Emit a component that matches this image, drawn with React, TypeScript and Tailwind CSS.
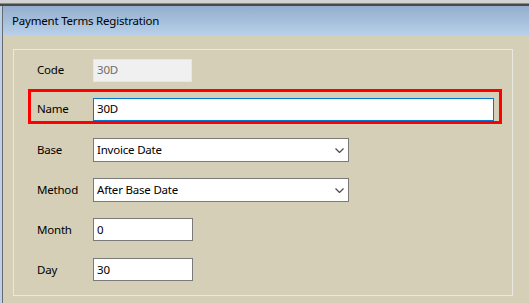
import React from "react";

const font = { fontFamily: '"Noto Sans", "Segoe UI", sans-serif' };

function Chevron() {
  return (
    <svg width="9" height="5" viewBox="0 0 9 5" className="shrink-0">
      <path d="M0.5 0.5 L4.5 4.5 L8.5 0.5" fill="none" stroke="#4a4a4a" strokeWidth="1.2" />
    </svg>
  );
}

function TextBox({ value, w, disabled, focused }: { value: string; w: string; disabled?: boolean; focused?: boolean }) {
  const cls = disabled
    ? "bg-[#f0f0f0] border-[#e6e6e6] text-[#6d6d6d]"
    : focused
    ? "bg-white border-[#0078d7] text-black"
    : "bg-white border-[#7a7a7a] text-black";
  return (
    <div className={`${w} h-[23px] border ${cls} flex items-center pl-[3px] text-[11.5px] tracking-[-0.2px] leading-none`}>
      {value}
    </div>
  );
}

function Select({ value }: { value: string }) {
  return (
    <div className="w-[256px] h-[24px] border border-[#7a7a7a] bg-white flex items-center justify-between pl-[3px] pr-[4px] text-[11.5px] tracking-[-0.2px] leading-none text-black">
      <span>{value}</span>
      <Chevron />
    </div>
  );
}

function Label({ children }: { children: React.ReactNode }) {
  return <div className="w-[56px] text-[11.5px] tracking-[-0.2px] leading-none text-black">{children}</div>;
}

export default function App() {
  return (
    <div className="w-[529px] h-[303px] overflow-hidden flex flex-col bg-[#b9d1ea]" style={font}>
      <div className="h-[3px] bg-[#d2d2d2] shrink-0" />
      <div className="h-px bg-[#8a8a8a] shrink-0" />
      <div className="h-[2px] bg-[#4a4a4a] shrink-0" />
      <div className="flex flex-1 min-h-0">
        <div className="w-[2px] bg-[#b9d1ea] shrink-0" />
        <div className="w-px bg-[#6a6a6a] shrink-0" />
        <div className="flex-1 flex flex-col min-w-0">
          <div className="h-[30px] shrink-0 bg-gradient-to-b from-[#93aecd] to-[#b9d1ea] flex items-center pl-[9px] text-[11.5px] tracking-[-0.2px] text-black">
            Payment Terms Registration
          </div>
          <div className="flex-1 bg-[#d4cfb6] pl-[10px] pr-[16px] pt-[13px]">
            <div className="border border-[#ebe8df] h-[247px] pt-[9px] pl-[14px] pr-[10px] flex flex-col">
              <div className="flex items-center h-[22px] pl-[9px]">
                <Label>Code</Label>
                <TextBox value="30D" w="w-[99px]" disabled />
              </div>
              <div className="mt-[8px] h-[35px] border-[3px] border-[#ff0000] flex items-end pl-[6px] pr-[5px]">
                <div className="flex items-center h-[24px] w-full">
                  <Label>Name</Label>
                  <div className="flex-1">
                    <TextBox value="30D" w="w-full" focused />
                  </div>
                </div>
              </div>
              <div className="mt-[14px] flex items-center h-[24px] pl-[9px]">
                <Label>Base</Label>
                <Select value="Invoice Date" />
              </div>
              <div className="mt-[16px] flex items-center h-[24px] pl-[9px]">
                <Label>Method</Label>
                <Select value="After Base Date" />
              </div>
              <div className="mt-[16px] flex items-center h-[23px] pl-[9px]">
                <Label>Month</Label>
                <TextBox value="0" w="w-[100px]" />
              </div>
              <div className="mt-[17px] flex items-center h-[23px] pl-[9px]">
                <Label>Day</Label>
                <TextBox value="30" w="w-[100px]" />
              </div>
            </div>
          </div>
        </div>
      </div>
    </div>
  );
}
